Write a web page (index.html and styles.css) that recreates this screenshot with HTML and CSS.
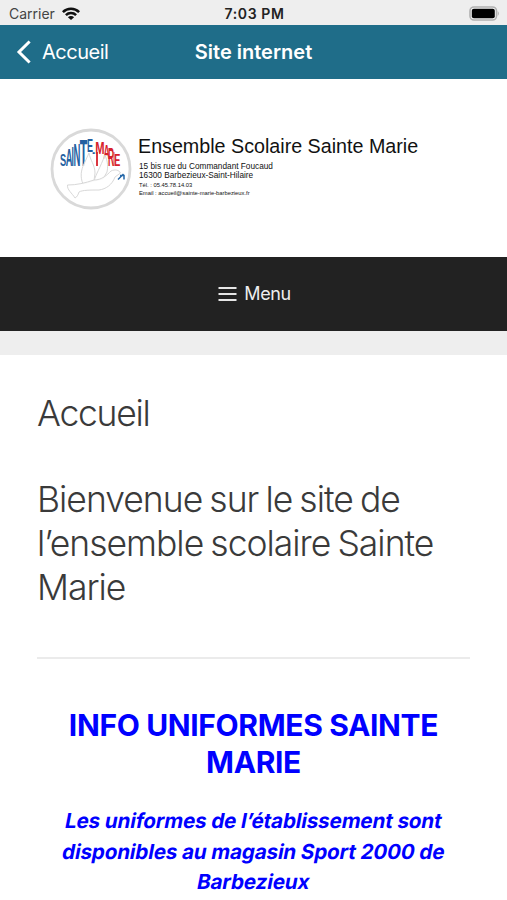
FILE: index.html
```html
<!DOCTYPE html>
<html lang="fr">
<head>
	<meta charset="UTF-8"/>
	<meta name="viewport" content="width=device-width, initial-scale=1"/>
	<title>Site internet</title>
	<link rel="stylesheet" href="styles.css">
</head>
<body>

<div class="status-bar">
	<div class="carrier">
		<span>Carrier</span>
		<svg class="wifi" viewBox="0 0 18 13" width="18" height="13">
			<path d="M0 4.3 A12.7 12.7 0 0 1 18 4.3 L16.2 6.1 A10.2 10.2 0 0 0 1.8 6.1 Z"/>
			<path d="M3 7.3 A8.5 8.5 0 0 1 15 7.3 L13.2 9.1 A5.9 5.9 0 0 0 4.8 9.1 Z"/>
			<path d="M5.9 10.2 A4.4 4.4 0 0 1 12.1 10.2 L9 13 Z"/>
		</svg>
	</div>
	<span class="time">7:03 PM</span>
	<svg class="battery" viewBox="0 0 31 15" width="31" height="15">
		<rect x="1" y="1" width="26.5" height="13" rx="4" fill="#f4f4f4" stroke="#b0b0b0" stroke-width="1.6"/>
		<rect x="2.8" y="2.8" width="23" height="9.4" rx="2"/>
		<path d="M28.8 5 Q30.8 7.5 28.8 10 Z" fill="#aaa"/>
	</svg>
</div>

<nav class="nav-bar">
	<a class="back">
		<svg viewBox="0 0 16 26" width="16" height="26">
			<path d="M13.6 2.5 L3 13 L13.6 23.5" fill="none" stroke="#fff" stroke-width="3"/>
		</svg>
		<span>Accueil</span>
	</a>
	<span class="nav-title">Site internet</span>
</nav>

<header class="site-header">
	<svg class="logo" viewBox="0 0 82 82" width="82" height="82">
		<circle cx="41" cy="41" r="39" fill="#fff" stroke="#d9d9d9" stroke-width="2.8"/>
		<g class="logo-text" fill="#2360a0">
			<text transform="translate(10 37.8) scale(.66 1.2)">S</text>
			<text transform="translate(15.8 37.8) scale(.66 1.7)">A</text>
			<text transform="translate(21.6 37.8) scale(.6 2)">I</text>
			<text transform="translate(23.6 37.8) scale(.68 2.3)">N</text>
			<text transform="translate(29.7 37.8) scale(.88 2.7)">T</text>
			<text transform="translate(37 23.5) scale(.64 1.3)">E</text>
			<text transform="translate(42.2 29) scale(.6 1)">-</text>
		</g>
		<g class="logo-text" fill="#d7212b">
			<text transform="translate(45.2 26) scale(.8 1.2)">M</text>
			<text transform="translate(53.4 31) scale(.62 1.5)">A</text>
			<text transform="translate(57.9 37.8) scale(.6 1.9)">R</text>
			<text transform="translate(63.2 37.8) scale(.4 1.5)">I</text>
			<text transform="translate(64.2 37.8) scale(.65 1.2)">E</text>
			<path d="M46.1 24h1.8v14h-1.8z"/>
		</g>
		<!-- dove: wings, then body with tail -->
		<path class="dove" d="M33 56 C30 49 31 42 34 36 L39 25 C40 32 45 37 45 45 L44 53 Z"/>
		<path class="dove" d="M44 53 C46 46 50 40 55 27 C58 34 58 39 57 44 L53 51 Z"/>
		<path class="dove" d="M17.5 57 C27 57 35 55 44 52 C52 52 57 47 61 43 C65 41 69 42 70.5 45 L65 49 C62 57 56 61 49 62 C41 62 32 62 29 64 C28 67 27 69 25 70 C22 65 17 62 17.5 57 Z"/>
		<path d="M68 51.5 L73.5 46 M70 47.5 H74 V51.5" fill="none" stroke="#2467a8" stroke-width="1.5"/>
	</svg>
	<div class="school">
		<div class="school-name">Ensemble Scolaire Sainte Marie</div>
		<div class="school-address">15 bis rue du Commandant Foucaud<br>16300 Barbezieux-Saint-Hilaire</div>
		<div class="school-contact">Tél. : 05.45.78.14.03<br>Email : accueil@sainte-marie-barbezieux.fr</div>
	</div>
</header>

<div class="menu-toggle">
	<svg viewBox="0 0 19 16" width="19" height="16">
		<path d="M.5 2H18.5M.5 8H18.5M.5 14H18.5" stroke="#e6e6e6" stroke-width="2"/>
	</svg>
	<span>Menu</span>
</div>

<main class="content">
	<h1>Accueil</h1>
	<h2>Bienvenue sur le site de l’ensemble scolaire Sainte Marie</h2>
	<hr>
	<h3>INFO UNIFORMES SAINTE MARIE</h3>
	<p class="notice">
		<span>Les uniformes de l’établissement sont</span>
		<span>disponibles au magasin Sport 2000 de</span>
		<span>Barbezieux</span>
	</p>
</main>

</body>
</html>
```
FILE: styles.css
```css
body {
    margin: 0;
    height: 900px;
    overflow: hidden;
    background-color: #eee;
    font-family: Inter, "Liberation Sans", sans-serif;
}

svg {
    display: block;
}

.status-bar {
    display: grid;
    grid-template-columns: 1fr auto 1fr;
    align-items: center;
    height: 25px;
    padding: 2px 7px 0 9px;
    box-sizing: border-box;
    font-size: 14px;
    color: #222;
}

.carrier {
    display: flex;
    align-items: center;
    gap: 7px;
    color: #444;
}

.wifi {
    fill: #111;
}

.time {
    font-weight: 600;
    letter-spacing: 0.6px;
}

.battery {
    justify-self: end;
}

.nav-bar {
    display: grid;
    grid-template-columns: 1fr auto 1fr;
    align-items: center;
    height: 54px;
    padding: 0 16px;
    box-sizing: border-box;
    background-color: #1f6d89;
    color: #fff;
    font-size: 20px;
}

.back {
    display: flex;
    align-items: center;
    gap: 10px;
    letter-spacing: -0.5px;
}

.nav-title {
    font-weight: 600;
}

.site-header {
    display: flex;
    height: 178px;
    padding: 49px 50px 0;
    box-sizing: border-box;
    gap: 6px;
    background-color: #fff;
}

.logo-text {
    font: bold 14px "Liberation Sans", Arial, sans-serif;
}

.dove {
    fill: #fff;
    fill-opacity: 0.85;
    stroke: #d8d8d8;
    stroke-width: 1;
}

.school {
    font-family: "Liberation Sans", Arial, sans-serif;
    color: #111;
    white-space: nowrap;
}

.school-name {
    margin-top: 6px;
    font-size: 19.7px;
    line-height: 24px;
}

.school-address {
    margin: 4px 0 0 1px;
    font-size: 8.25px;
    line-height: 9px;
}

.school-contact {
    margin: 2px 0 0 1px;
    font-size: 5.8px;
    line-height: 7.5px;
}

.menu-toggle {
    display: flex;
    align-items: center;
    justify-content: center;
    gap: 7px;
    height: 74px;
    padding: 0 0 1px 2px;
    box-sizing: border-box;
    background-color: #222;
    color: #eee;
    font-size: 18px;
    letter-spacing: -0.4px;
}

.content {
    height: 545px;
    margin-top: 24px;
    padding: 37px 37px 0;
    box-sizing: border-box;
    background-color: #fff;
    color: #3a3a3a;
}

h1, h2 {
    margin: 0;
    font-size: 35.5px;
    font-weight: 300;
    line-height: 44px;
    letter-spacing: -1.27px;
}

h2 {
    margin-top: 42px;
    letter-spacing: -1px;
    word-spacing: -1.9px;
}

hr {
    height: 2px;
    margin: 47px 0 48px;
    border: 0;
    background-color: #ebebeb;
}

h3 {
    margin: 0;
    font-size: 30px;
    font-weight: 650;
    line-height: 37px;
    letter-spacing: -0.36px;
    text-align: center;
    color: #00f;
}

.notice {
    margin: 25px 0 0;
    font-size: 20.6px;
    font-weight: 650;
    line-height: 30.6px;
    letter-spacing: -0.12px;
    text-align: center;
    color: #00f;
}

/* slanted upright letters, line by line */
.notice span {
    display: block;
    transform: skewX(-11deg);
}
```
